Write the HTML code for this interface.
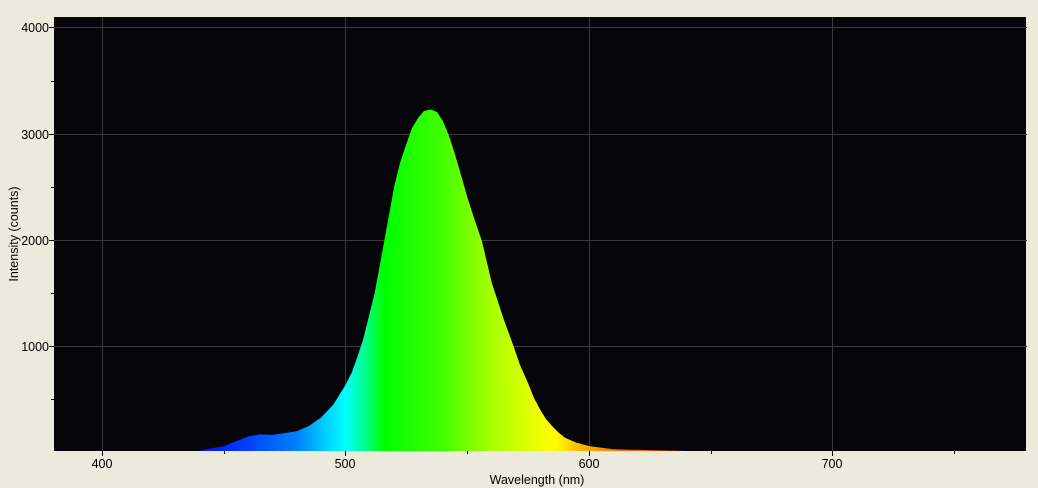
<!DOCTYPE html>
<html><head><style>
html,body{margin:0;padding:0;background:#ece9dd;}
svg{display:block;}
text{font-family:"Liberation Sans","DejaVu Sans",sans-serif;font-size:12.5px;fill:#000;}
</style></head><body>
<svg width="1038" height="488" viewBox="0 0 1038 488">
<defs>
<linearGradient id="g" gradientUnits="userSpaceOnUse" x1="199" y1="0" x2="686" y2="0">
<stop offset="0" stop-color="#0010ff"/>
<stop offset="0.1" stop-color="#0040ff"/>
<stop offset="0.2" stop-color="#0080ff"/>
<stop offset="0.255" stop-color="#00c8ff"/>
<stop offset="0.3" stop-color="#00ffff"/>
<stop offset="0.34" stop-color="#00ff90"/>
<stop offset="0.38" stop-color="#00ff00"/>
<stop offset="0.5" stop-color="#40ff00"/>
<stop offset="0.6" stop-color="#a8ff00"/>
<stop offset="0.7" stop-color="#f0ff00"/>
<stop offset="0.73" stop-color="#ffff00"/>
<stop offset="0.79" stop-color="#ffb000"/>
<stop offset="0.86" stop-color="#ff7000"/>
<stop offset="1" stop-color="#ff3000"/>
</linearGradient>
</defs>
<rect x="54" y="17" width="972" height="434" fill="#06050a"/>
<g stroke="#3c3c3c" stroke-width="1">
<line x1="102.5" y1="17" x2="102.5" y2="451"/>
<line x1="345.5" y1="17" x2="345.5" y2="451"/>
<line x1="589.5" y1="17" x2="589.5" y2="451"/>
<line x1="832.5" y1="17" x2="832.5" y2="451"/>
<line x1="54" y1="27.5" x2="1027" y2="27.5"/>
<line x1="54" y1="134.5" x2="1027" y2="134.5"/>
<line x1="54" y1="240.5" x2="1027" y2="240.5"/>
<line x1="54" y1="346.5" x2="1027" y2="346.5"/>
</g>
<path fill="url(#g)" d="M199.4,451 L199.4,450.5 L223.8,446.1 L248.1,436.5 L260.3,434.4 L272.5,434.9 L296.8,431.2 L309,425.9 L321.2,417.4 L333.3,404.6 L345.5,385 L352,372 L357.7,356 L363,340 L369,316 L374.7,292.9 L384.5,239.7 L394.2,186.5 L400,163 L406.4,143.9 L412,128 L418.6,117.3 L424,111 L430.7,109.5 L437,112 L442.9,121 L449,136 L455.1,154.6 L461,175 L467.3,197.1 L474,218 L481.9,241 L491.6,282.3 L503.8,319.5 L513.5,346.1 L520,365 L528.1,383.3 L534,398 L540.3,409.9 L546,419 L552.5,426.5 L558,432 L564.7,437.6 L576,442.5 L589,446.1 L613.4,449.3 L686.4,451 Z"/>
<g stroke="#000" stroke-width="1">
<line x1="49" y1="27.5" x2="54" y2="27.5"/>
<line x1="49" y1="134.5" x2="54" y2="134.5"/>
<line x1="49" y1="240.5" x2="54" y2="240.5"/>
<line x1="49" y1="346.5" x2="54" y2="346.5"/>
<line x1="51" y1="81.5" x2="54" y2="81.5"/>
<line x1="51" y1="187.5" x2="54" y2="187.5"/>
<line x1="51" y1="293.5" x2="54" y2="293.5"/>
<line x1="51" y1="399.5" x2="54" y2="399.5"/>
<line x1="102.5" y1="451" x2="102.5" y2="456"/>
<line x1="345.5" y1="451" x2="345.5" y2="456"/>
<line x1="589.5" y1="451" x2="589.5" y2="456"/>
<line x1="832.5" y1="451" x2="832.5" y2="456"/>
<line x1="224.5" y1="451" x2="224.5" y2="454"/>
<line x1="467.5" y1="451" x2="467.5" y2="454"/>
<line x1="711.5" y1="451" x2="711.5" y2="454"/>
<line x1="954.5" y1="451" x2="954.5" y2="454"/>
</g>
<g text-anchor="end">
<text x="49" y="32">4000</text>
<text x="49" y="139">3000</text>
<text x="49" y="245">2000</text>
<text x="49" y="351">1000</text>
</g>
<g text-anchor="middle">
<text x="102" y="468">400</text>
<text x="345" y="468">500</text>
<text x="589" y="468">600</text>
<text x="832" y="468">700</text>
<text x="537" y="484">Wavelength (nm)</text>
<text transform="translate(18,234) rotate(-90)">Intensity (counts)</text>
</g>
</svg>
</body></html>
